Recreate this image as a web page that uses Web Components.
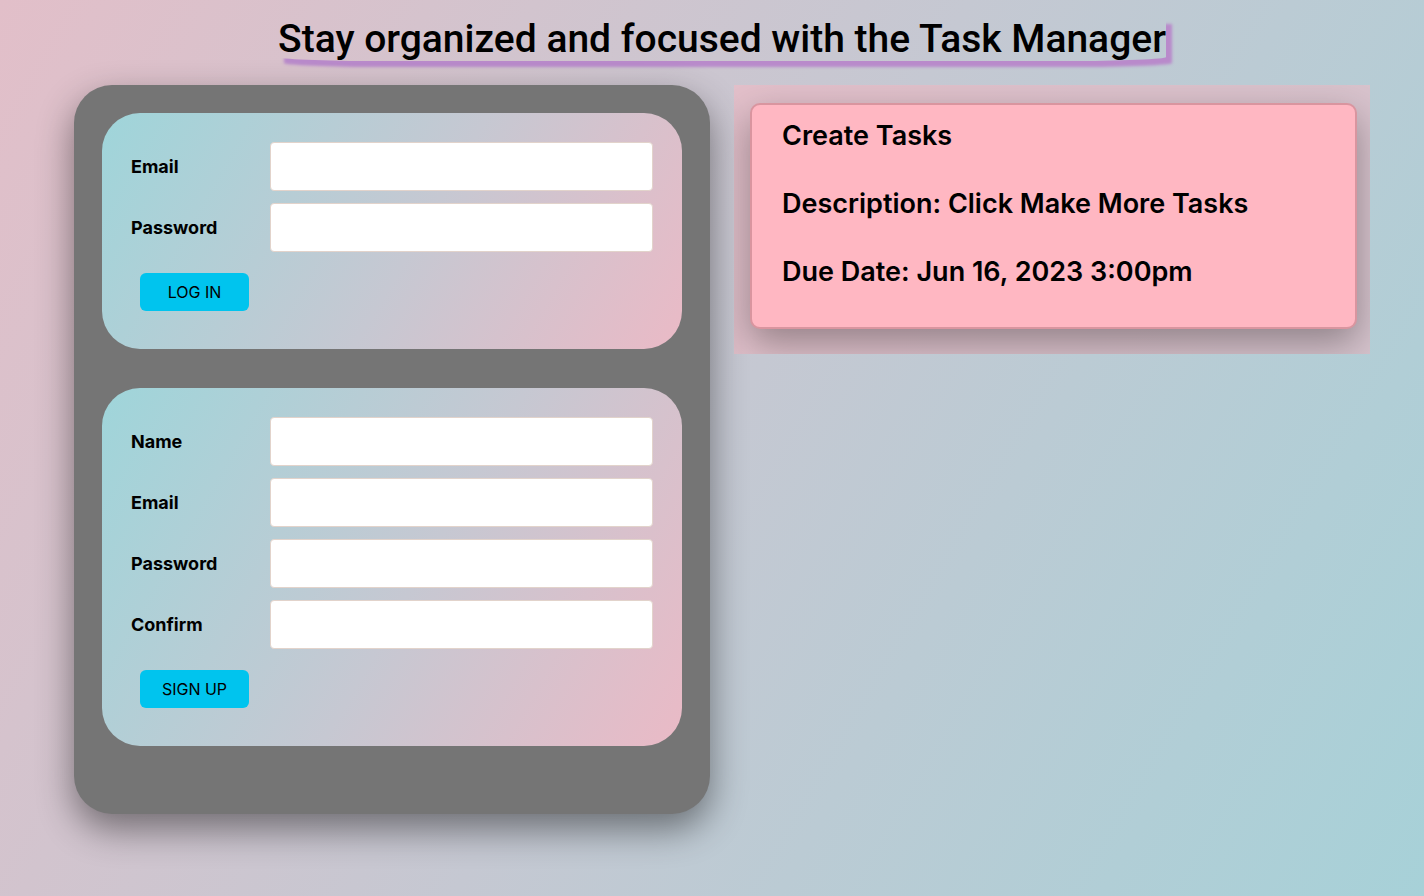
<!DOCTYPE html>
<html lang="en">
<head>
<meta charset="utf-8">
<title>Task Manager</title>
<style>
  html { min-height: 100%; background: linear-gradient(120deg, #e2bfc9, #c5c8d2 50%, #a7d1d8); }
  body { margin: 0; font-family: Inter, "Liberation Sans", sans-serif; color: #000; }
</style>
</head>
<body>
<task-app></task-app>
<script>
const define = (name, html) => customElements.define(name, class extends HTMLElement {
  constructor() {
    super();
    const t = document.createElement('template');
    t.innerHTML = html;
    this.attachShadow({ mode: 'open' }).append(t.content.cloneNode(true));
  }
});

define('page-title', `
<style>
  :host { display: flex; justify-content: center; }
  h1 { margin: 0; font-family: Roboto, "Liberation Sans", sans-serif; font-size: 39px; line-height: 43px; font-weight: 500; white-space: nowrap;
       border-radius: 0 0 100px 100px / 0 0 4px 4px; box-shadow: 6px 6px 3px #b98acb; }
</style>
<h1><slot></slot></h1>`);

customElements.define('form-field', class extends HTMLElement {
  connectedCallback() {
    if (this.shadowRoot) return;
    this.attachShadow({ mode: 'open' }).innerHTML = `
<style>
  :host { display: grid; grid-template-columns: 139px minmax(0, 1fr); align-items: center; }
  label { font-size: 18px; line-height: 24px; font-weight: 700; }
  input { box-sizing: border-box; width: 100%; height: 49px; margin: 0; padding: 0 12px;
          font: inherit; font-size: 18px; background: #fff; border: 1px solid #e2d3cb; border-radius: 4px; outline: 0; }
</style>
<label for="field"></label><input id="field">`;
    this.shadowRoot.querySelector('label').textContent = this.getAttribute('label');
    this.shadowRoot.querySelector('input').type = this.getAttribute('type') || 'text';
  }
});

define('action-button', `
<style>
  :host { display: block; margin: 9px 9px 0; }
  button { width: 109px; height: 38px; padding: 0; border: 0; border-radius: 6px; background: #00c4ee;
           color: #000; font: inherit; font-size: 16px; line-height: 24px; cursor: pointer; display: block; }
</style>
<button type="button"><slot></slot></button>`);

define('form-card', `
<style>
  :host { display: block; }
  form { display: flex; flex-direction: column; gap: 12px; padding: 29px 29px 38px;
         border-radius: 38px; background: linear-gradient(120deg, #9fd5da, #c6c8d2 54%, #eabac6); }
</style>
<form><slot></slot></form>`);

define('account-panel', `
<style>
  :host { display: flex; flex-direction: column; gap: 39px; padding: 28px 28px 68px;
          border-radius: 38px; background: #757575; box-shadow: 0 15px 36px rgba(0,0,0,.45); }
</style>
<slot></slot>`);

define('task-card', `
<style>
  :host { display: block; padding: 18px 13px 25px 16px; overflow: hidden; background: rgba(255,182,193,.45); }
  article { display: grid; gap: 34px; padding: 14px 30px 38px; border: 2px solid #d9959f; border-radius: 10px;
            background: #ffb7c2; font-size: 27px; line-height: 34px; font-weight: 600;
            box-shadow: 0 14px 36px rgba(0,0,0,.33); }
</style>
<article><slot></slot></article>`);

define('task-app', `
<style>
  :host { display: block; padding: 18px 54px 64px 74px; }
  page-title { margin-bottom: 24px; }
  main { display: grid; grid-template-columns: repeat(2, minmax(0, 1fr)); column-gap: 24px; align-items: start; }
  h2, p { margin: 0; font: inherit; }
</style>
<page-title>Stay organized and focused with the Task Manager</page-title>
<main>
  <account-panel>
    <form-card>
      <form-field label="Email" type="email"></form-field>
      <form-field label="Password" type="password"></form-field>
      <action-button>LOG IN</action-button>
    </form-card>
    <form-card>
      <form-field label="Name"></form-field>
      <form-field label="Email" type="email"></form-field>
      <form-field label="Password" type="password"></form-field>
      <form-field label="Confirm" type="password"></form-field>
      <action-button>SIGN UP</action-button>
    </form-card>
  </account-panel>
  <task-card>
    <h2>Create Tasks</h2>
    <p>Description: Click Make More Tasks</p>
    <p>Due Date: Jun 16, 2023 3:00pm</p>
  </task-card>
</main>`);
</script>
</body>
</html>
